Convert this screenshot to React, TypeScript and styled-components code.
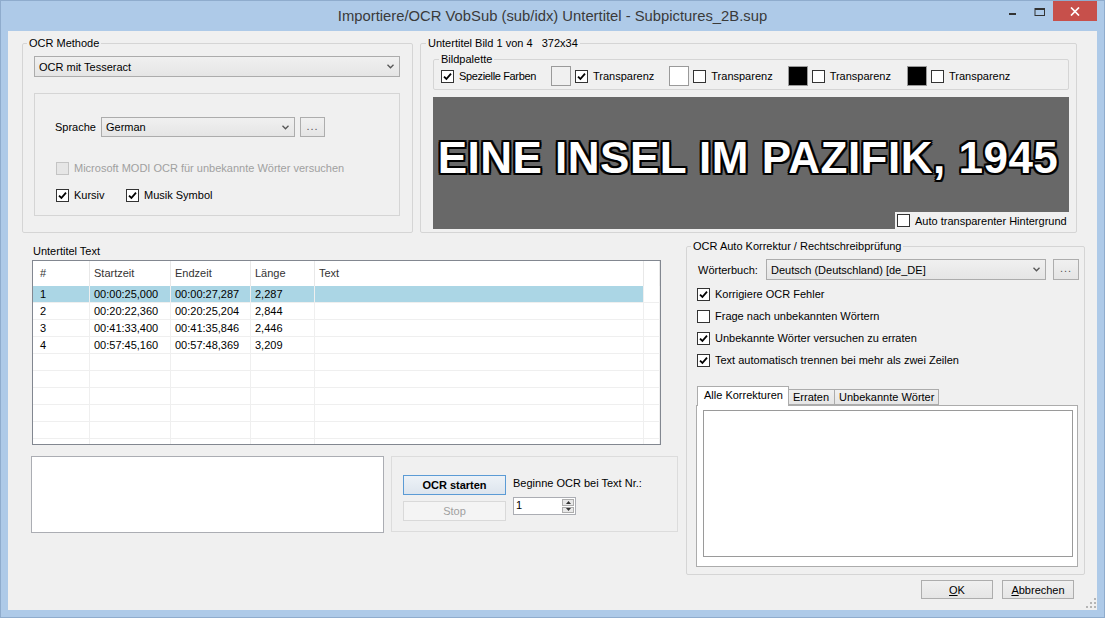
import React from 'react';
import styled, {createGlobalStyle} from 'styled-components';

const Global = createGlobalStyle`
  html, body {
    margin: 0;
    padding: 0;
  }
  body {
    font-family: "Liberation Sans", Arial, sans-serif;
    font-size: 11px;
    color: #000;
    background: #fff;
  }
  * {
    box-sizing: border-box;
  }
`;

const Window = styled.div`
  width: 1105px;
  height: 618px;
  background: #aecae8;
  border: 1px solid #8faccd;
  padding: 0 7px 7px 7px;
  display: flex;
  flex-direction: column;
`;

const TitleBar = styled.div`
  height: 30px;
  display: grid;
  grid-template-columns: 1fr auto 1fr;
  align-items: start;
`;

const Title = styled.div`
  grid-column: 2;
  font-size: 14.8px;
  line-height: 30px;
  color: #3a3a3a;
  white-space: nowrap;
`;

const Caption = styled.div`
  grid-column: 3;
  justify-self: end;
  display: flex;
`;

const CaptionButton = styled.div<{ $w: number; $close?: boolean }>`
  width: ${p => p.$w}px;
  height: 20px;
  background: ${p => (p.$close ? '#c7504b' : 'transparent')};
  display: flex;
  align-items: center;
  justify-content: center;
`;

const Content = styled.div`
  flex: 1;
  background: #f0f0f0;
  padding: 6px 8px 0 14px;
  display: flex;
  flex-direction: column;
  min-height: 0;
`;

const TopRow = styled.div`
  display: flex;
  gap: 7px;
`;

const GroupBox = styled.fieldset<{ $w: number; $h: number; $pad: string }>`
  margin: 0;
  min-width: 0;
  width: ${p => p.$w}px;
  height: ${p => p.$h}px;
  padding: ${p => p.$pad};
  border: 1px solid #d5d5d5;
  border-radius: 2px;
`;

const Legend = styled.legend<{ $shift?: number; $lh?: number }>`
  padding: 0 2px;
  margin-left: ${p => p.$shift ?? -7}px;
  line-height: ${p => p.$lh ?? 13}px;
  font-size: 11px;
  white-space: pre;
`;

const Combo = styled.div<{ $w: number; $h?: number }>`
  width: ${p => p.$w}px;
  height: ${p => p.$h ?? 21}px;
  border: 1px solid #acacac;
  background: linear-gradient(#f0f0f0, #e5e5e5);
  display: flex;
  align-items: center;
  justify-content: space-between;
  padding: 0 5px 0 4px;
  white-space: nowrap;
`;

const Panel = styled.div`
  margin-top: 16px;
  height: 123px;
  border: 1px solid #d5d5d5;
  padding: 23px 0 0 20px;
`;

const Row = styled.div<{ $mt?: number; $gap?: number }>`
  display: flex;
  align-items: center;
  margin-top: ${p => p.$mt ?? 0}px;
  gap: ${p => p.$gap ?? 0}px;
`;

const FieldLabel = styled.div<{ $w: number }>`
  width: ${p => p.$w}px;
  white-space: nowrap;
`;

const Button = styled.div<{ $w: number; $h?: number; $kind?: 'default' | 'disabled' }>`
  width: ${p => p.$w}px;
  height: ${p => p.$h ?? 20}px;
  display: flex;
  align-items: center;
  justify-content: center;
  white-space: nowrap;
  border: 1px solid ${p => (p.$kind === 'default' ? '#5b9bd5' : p.$kind === 'disabled' ? '#d9d9d9' : '#adadad')};
  background: ${p =>
    p.$kind === 'default'
      ? 'linear-gradient(#edf2f7, #dde5ee)'
      : p.$kind === 'disabled'
        ? '#f4f4f4'
        : 'linear-gradient(#f0f0f0, #e5e5e5)'};
  color: ${p => (p.$kind === 'disabled' ? '#a0a0a0' : '#000')};
  font-weight: ${p => (p.$kind === 'default' ? 'bold' : 'normal')};
`;

const Dots = styled.span`
  color: #555;
  letter-spacing: 1px;
  margin-top: -3px;
`;

const CheckLabel = styled.div<{ $disabled?: boolean; $w?: number; $narrow?: boolean }>`
  display: flex;
  align-items: center;
  gap: 5px;
  height: 14px;
  white-space: nowrap;
  width: ${p => (p.$w ? `${p.$w}px` : 'auto')};
  letter-spacing: ${p => (p.$narrow ? '-0.35px' : 'normal')};
  color: ${p => (p.$disabled ? '#a0a0a0' : '#000')};
`;

const Box = styled.span<{ $disabled?: boolean }>`
  width: 13px;
  height: 13px;
  flex: none;
  border: 1px solid ${p => (p.$disabled ? '#c4c4c4' : '#333')};
  background: ${p => (p.$disabled ? '#e6e6e6' : '#fff')};
  display: flex;
  align-items: center;
  justify-content: center;
`;

const Swatch = styled.span<{ $color: string }>`
  width: 20px;
  height: 20px;
  flex: none;
  border: 1px solid #9a9a9a;
  background: ${p => p.$color};
`;

const PaletteItem = styled.div<{ $ml: number }>`
  display: flex;
  align-items: center;
  gap: 4px;
  margin-left: ${p => p.$ml}px;
`;

const Picture = styled.div`
  margin-top: 7px;
  height: 132px;
  background: #686868;
  display: flex;
  flex-direction: column;
`;

const PictureText = styled.div`
  flex: 1;
  display: flex;
  align-items: center;
  justify-content: center;
  padding: 6px 6px 0 0;
  font-family: "Liberation Sans", Arial, sans-serif;
  font-weight: bold;
  font-size: 44px;
  letter-spacing: 0.5px;
  color: #fff;
  white-space: nowrap;
  text-shadow:
    2px 0 0 #000, -2px 0 0 #000, 0 2px 0 #000, 0 -2px 0 #000,
    1px 1px 0 #000, -1px -1px 0 #000, 1px -1px 0 #000, -1px 1px 0 #000,
    2px 2px 0 #111, -2px -2px 0 #111, 2px -2px 0 #111, -2px 2px 0 #111;
`;

const AutoBg = styled.div`
  align-self: flex-end;
  height: 17px;
  width: 174px;
  background: #f0f0f0;
  display: flex;
  align-items: center;
  padding-left: 2px;
`;

const LowerRow = styled.div`
  display: flex;
  gap: 8px;
  margin: 7px 0 0 9px;
`;

const LeftColumn = styled.div`
  width: 647px;
  display: flex;
  flex-direction: column;
`;

const SectionLabel = styled.div`
  margin: 5px 0 0 2px;
  line-height: 12px;
`;

const List = styled.div`
  margin: 3px 0 0 1px;
  width: 629px;
  height: 185px;
  border: 1px solid #828790;
  background: #fff;
  overflow: hidden;
`;

const ListGrid = styled.div`
  display: grid;
  grid-template-columns: 57px 81px 80px 64px 329px 1fr;
`;

const HeadCell = styled.div<{ $first?: boolean }>`
  height: 25px;
  line-height: 25px;
  padding-left: ${p => (p.$first ? 7 : 4)}px;
  border-right: 1px solid #e8e8e8;
  color: #333;
  white-space: nowrap;
`;

const Cell = styled.div<{ $first?: boolean; $selected?: boolean }>`
  height: 17px;
  line-height: 16px;
  padding-left: ${p => (p.$first ? 7 : 4)}px;
  border-right: 1px solid #efefef;
  border-bottom: 1px solid #efefef;
  background: ${p => (p.$selected ? '#abd6e5' : '#fff')};
  white-space: nowrap;
`;

const BottomRow = styled.div`
  display: flex;
  gap: 7px;
  margin-top: 11px;
`;

const TextArea = styled.div`
  width: 353px;
  height: 77px;
  border: 1px solid #abadb3;
  background: #fff;
`;

const OcrPanel = styled.div`
  width: 287px;
  height: 76px;
  border: 1px solid #dcdcdc;
  padding: 18px 0 0 11px;
  display: flex;
  gap: 7px;
`;

const Stack = styled.div<{ $gap: number }>`
  display: flex;
  flex-direction: column;
  gap: ${p => p.$gap}px;
`;

const StartLabel = styled.div`
  line-height: 14px;
  margin-top: 1px;
  white-space: nowrap;
`;

const Spinner = styled.div`
  width: 63px;
  height: 18px;
  border: 1px solid #abadb3;
  background: #fff;
  display: flex;
  justify-content: space-between;
  padding: 1px 1px 1px 2px;
`;

const SpinButtons = styled.div`
  width: 12px;
  display: flex;
  flex-direction: column;
  gap: 1px;
`;

const SpinButton = styled.div`
  flex: 1;
  border: 1px solid #adadad;
  background: #e8e8e8;
  display: flex;
  align-items: center;
  justify-content: center;
`;

const Tabs = styled.div`
  margin: 19px 0 0 -2px;
`;

const TabStrip = styled.div`
  display: flex;
  align-items: flex-end;
  height: 19px;
  padding-left: 1px;
  position: relative;
  z-index: 1;
`;

const Tab = styled.div<{ $w: number; $active?: boolean }>`
  width: ${p => p.$w}px;
  height: ${p => (p.$active ? 20 : 16)}px;
  margin-bottom: ${p => (p.$active ? -1 : 0)}px;
  margin-left: ${p => (p.$active ? 0 : -1)}px;
  border: 1px solid #acacac;
  border-bottom: ${p => (p.$active ? 'none' : '1px solid #acacac')};
  background: ${p => (p.$active ? '#fff' : 'linear-gradient(#f0f0f0, #e5e5e5)')};
  padding-left: ${p => (p.$active ? 6 : 4)}px;
  line-height: ${p => (p.$active ? 17 : 14)}px;
  white-space: nowrap;
`;

const TabPanel = styled.div`
  width: 382px;
  height: 162px;
  border: 1px solid #acacac;
  background: #fff;
  padding: 4px 0 0 6px;
`;

const InnerBox = styled.div`
  width: 370px;
  height: 147px;
  border: 1px solid #9a9a9a;
  background: #fff;
`;

const Footer = styled.div`
  flex: 1;
  display: flex;
  justify-content: flex-end;
  align-items: flex-start;
  margin: 5px -7px 0 0;
`;

const Grip = styled.svg`
  align-self: flex-end;
  margin: 0 0 2px 12px;
`;

const Key = styled.span`
  text-decoration: underline;
`;

const Check = ({checked, disabled}: { checked?: boolean; disabled?: boolean }) => (
  <Box $disabled={disabled}>
    {checked && (
      <svg width="9" height="9" viewBox="0 0 9 9">
        <path d="M1 4.6 L3.4 7 L8 1.6" stroke="#000" strokeWidth="1.8" fill="none"/>
      </svg>
    )}
  </Box>
);

const Chevron = () => (
  <svg width="7" height="5" viewBox="0 0 7 5">
    <path d="M0.5 0.8 L3.5 3.8 L6.5 0.8" stroke="#555" strokeWidth="1.3" fill="none"/>
  </svg>
);

const rows = [
  ['1', '00:00:25,000', '00:00:27,287', '2,287'],
  ['2', '00:20:22,360', '00:20:25,204', '2,844'],
  ['3', '00:41:33,400', '00:41:35,846', '2,446'],
  ['4', '00:57:45,160', '00:57:48,369', '3,209'],
];

const palette = [
  {color: '#f0f0f0', checked: true, ml: 15},
  {color: '#ffffff', checked: false, ml: 15},
  {color: '#000000', checked: false, ml: 15},
  {color: '#000000', checked: false, ml: 16},
];

const App: React.FC = () => {
  const emptyRows = Array.from({length: 6}, (_, i) => `e${i}`);

  return (
    <Window>
      <Global/>
      <TitleBar>
        <Title>Importiere/OCR VobSub (sub/idx) Untertitel - Subpictures_2B.sup</Title>
        <Caption>
          <CaptionButton $w={26}>
            <svg width="26" height="20"><rect x="9" y="12" width="7" height="2" fill="#333"/></svg>
          </CaptionButton>
          <CaptionButton $w={27}>
            <svg width="27" height="20">
              <rect x="9" y="7.5" width="9.5" height="7" fill="none" stroke="#333" strokeWidth="1"/>
              <rect x="9" y="7" width="10" height="2" fill="#333"/>
            </svg>
          </CaptionButton>
          <CaptionButton $w={44} $close>
            <svg width="10" height="9" viewBox="0 0 10 9">
              <path d="M1 0.5 L9 8.5 M9 0.5 L1 8.5" stroke="#fff" strokeWidth="1.7"/>
            </svg>
          </CaptionButton>
        </Caption>
      </TitleBar>

      <Content>
        <TopRow>
          <GroupBox $w={391} $h={196} $pad="6px 12px 0 11px">
            <Legend>OCR Methode</Legend>
            <Combo $w={366}>OCR mit Tesseract<Chevron/></Combo>
            <Panel>
              <Row>
                <FieldLabel $w={46}>Sprache</FieldLabel>
                <Combo $w={194} $h={20}>German<Chevron/></Combo>
                <Button $w={25} style={{marginLeft: 5}}><Dots>...</Dots></Button>
              </Row>
              <Row $mt={24}>
                <CheckLabel $disabled style={{marginLeft: 1}}>
                  <Check disabled/>Microsoft MODI OCR für unbekannte Wörter versuchen
                </CheckLabel>
              </Row>
              <Row $mt={13}>
                <CheckLabel $w={70} style={{marginLeft: 1}}><Check checked/>Kursiv</CheckLabel>
                <CheckLabel><Check checked/>Musik Symbol</CheckLabel>
              </Row>
            </Panel>
          </GroupBox>

          <GroupBox $w={657} $h={196} $pad="3px 7px 3px 12px">
            <Legend>{'Untertitel Bild 1 von 4   372x34'}</Legend>
            <GroupBox $w={636} $h={37} $pad="1px 6px 0 7px">
              <Legend $shift={-2} $lh={12}>Bildpalette</Legend>
              <Row>
                <CheckLabel $narrow><Check checked/>Spezielle Farben</CheckLabel>
                {palette.map((p, i) => (
                  <PaletteItem key={i} $ml={p.ml}>
                    <Swatch $color={p.color}/>
                    <CheckLabel><Check checked={p.checked}/>Transparenz</CheckLabel>
                  </PaletteItem>
                ))}
              </Row>
            </GroupBox>
            <Picture>
              <PictureText>EINE INSEL IM PAZIFIK, 1945</PictureText>
              <AutoBg>
                <CheckLabel><Check/>Auto transparenter Hintergrund</CheckLabel>
              </AutoBg>
            </Picture>
          </GroupBox>
        </TopRow>

        <LowerRow>
          <LeftColumn>
            <SectionLabel>Untertitel Text</SectionLabel>
            <List>
              <ListGrid>
                <HeadCell $first>#</HeadCell>
                <HeadCell>Startzeit</HeadCell>
                <HeadCell>Endzeit</HeadCell>
                <HeadCell>Länge</HeadCell>
                <HeadCell>Text</HeadCell>
                <HeadCell/>
                {rows.map((r, i) => (
                  <React.Fragment key={r[0]}>
                    <Cell $first $selected={i === 0}>{r[0]}</Cell>
                    <Cell $selected={i === 0}>{r[1]}</Cell>
                    <Cell $selected={i === 0}>{r[2]}</Cell>
                    <Cell $selected={i === 0}>{r[3]}</Cell>
                    <Cell $selected={i === 0}/>
                    <Cell/>
                  </React.Fragment>
                ))}
                {emptyRows.map(k => (
                  <React.Fragment key={k}>
                    <Cell $first/><Cell/><Cell/><Cell/><Cell/><Cell/>
                  </React.Fragment>
                ))}
              </ListGrid>
            </List>
            <BottomRow>
              <TextArea/>
              <OcrPanel>
                <Stack $gap={6}>
                  <Button $w={103} $kind="default">OCR starten</Button>
                  <Button $w={103} $kind="disabled">Stop</Button>
                </Stack>
                <Stack $gap={7}>
                  <StartLabel>Beginne OCR bei Text Nr.:</StartLabel>
                  <Spinner>
                    <span>1</span>
                    <SpinButtons>
                      <SpinButton>
                        <svg width="5" height="3"><path d="M0 3 L2.5 0 L5 3 Z" fill="#333"/></svg>
                      </SpinButton>
                      <SpinButton>
                        <svg width="5" height="3"><path d="M0 0 L2.5 3 L5 0 Z" fill="#333"/></svg>
                      </SpinButton>
                    </SpinButtons>
                  </Spinner>
                </Stack>
              </OcrPanel>
            </BottomRow>
          </LeftColumn>

          <GroupBox $w={399} $h={335} $pad="6px 5px 0 11px">
            <Legend>OCR Auto Korrektur / Rechtschreibprüfung</Legend>
            <Row>
              <FieldLabel $w={68}>Wörterbuch:</FieldLabel>
              <Combo $w={280}>Deutsch (Deutschland) [de_DE]<Chevron/></Combo>
              <Button $w={26} $h={21} style={{marginLeft: 7}}><Dots>...</Dots></Button>
            </Row>
            <Stack $gap={8} style={{marginTop: 7, marginLeft: -1}}>
              <CheckLabel><Check checked/>Korrigiere OCR Fehler</CheckLabel>
              <CheckLabel><Check/>Frage nach unbekannten Wörtern</CheckLabel>
              <CheckLabel><Check checked/>Unbekannte Wörter versuchen zu erraten</CheckLabel>
              <CheckLabel><Check checked/>Text automatisch trennen bei mehr als zwei Zeilen</CheckLabel>
            </Stack>
            <Tabs>
              <TabStrip>
                <Tab $w={92} $active>Alle Korrekturen</Tab>
                <Tab $w={47}>Erraten</Tab>
                <Tab $w={105}>Unbekannte Wörter</Tab>
              </TabStrip>
              <TabPanel>
                <InnerBox/>
              </TabPanel>
            </Tabs>
          </GroupBox>
        </LowerRow>

        <Footer>
          <Row $gap={9}>
            <Button $w={72} $h={19}><Key>O</Key>K</Button>
            <Button $w={72} $h={19}><Key>A</Key>bbrechen</Button>
          </Row>
          <Grip width="10" height="10" viewBox="0 0 10 10">
            {[[8, 0], [8, 4], [4, 4], [8, 8], [4, 8], [0, 8]].map(([x, y]) => (
              <rect key={`${x}-${y}`} x={x} y={y} width="2" height="2" fill="#b5b5b5"/>
            ))}
          </Grip>
        </Footer>
      </Content>
    </Window>
  );
};

export default App;
